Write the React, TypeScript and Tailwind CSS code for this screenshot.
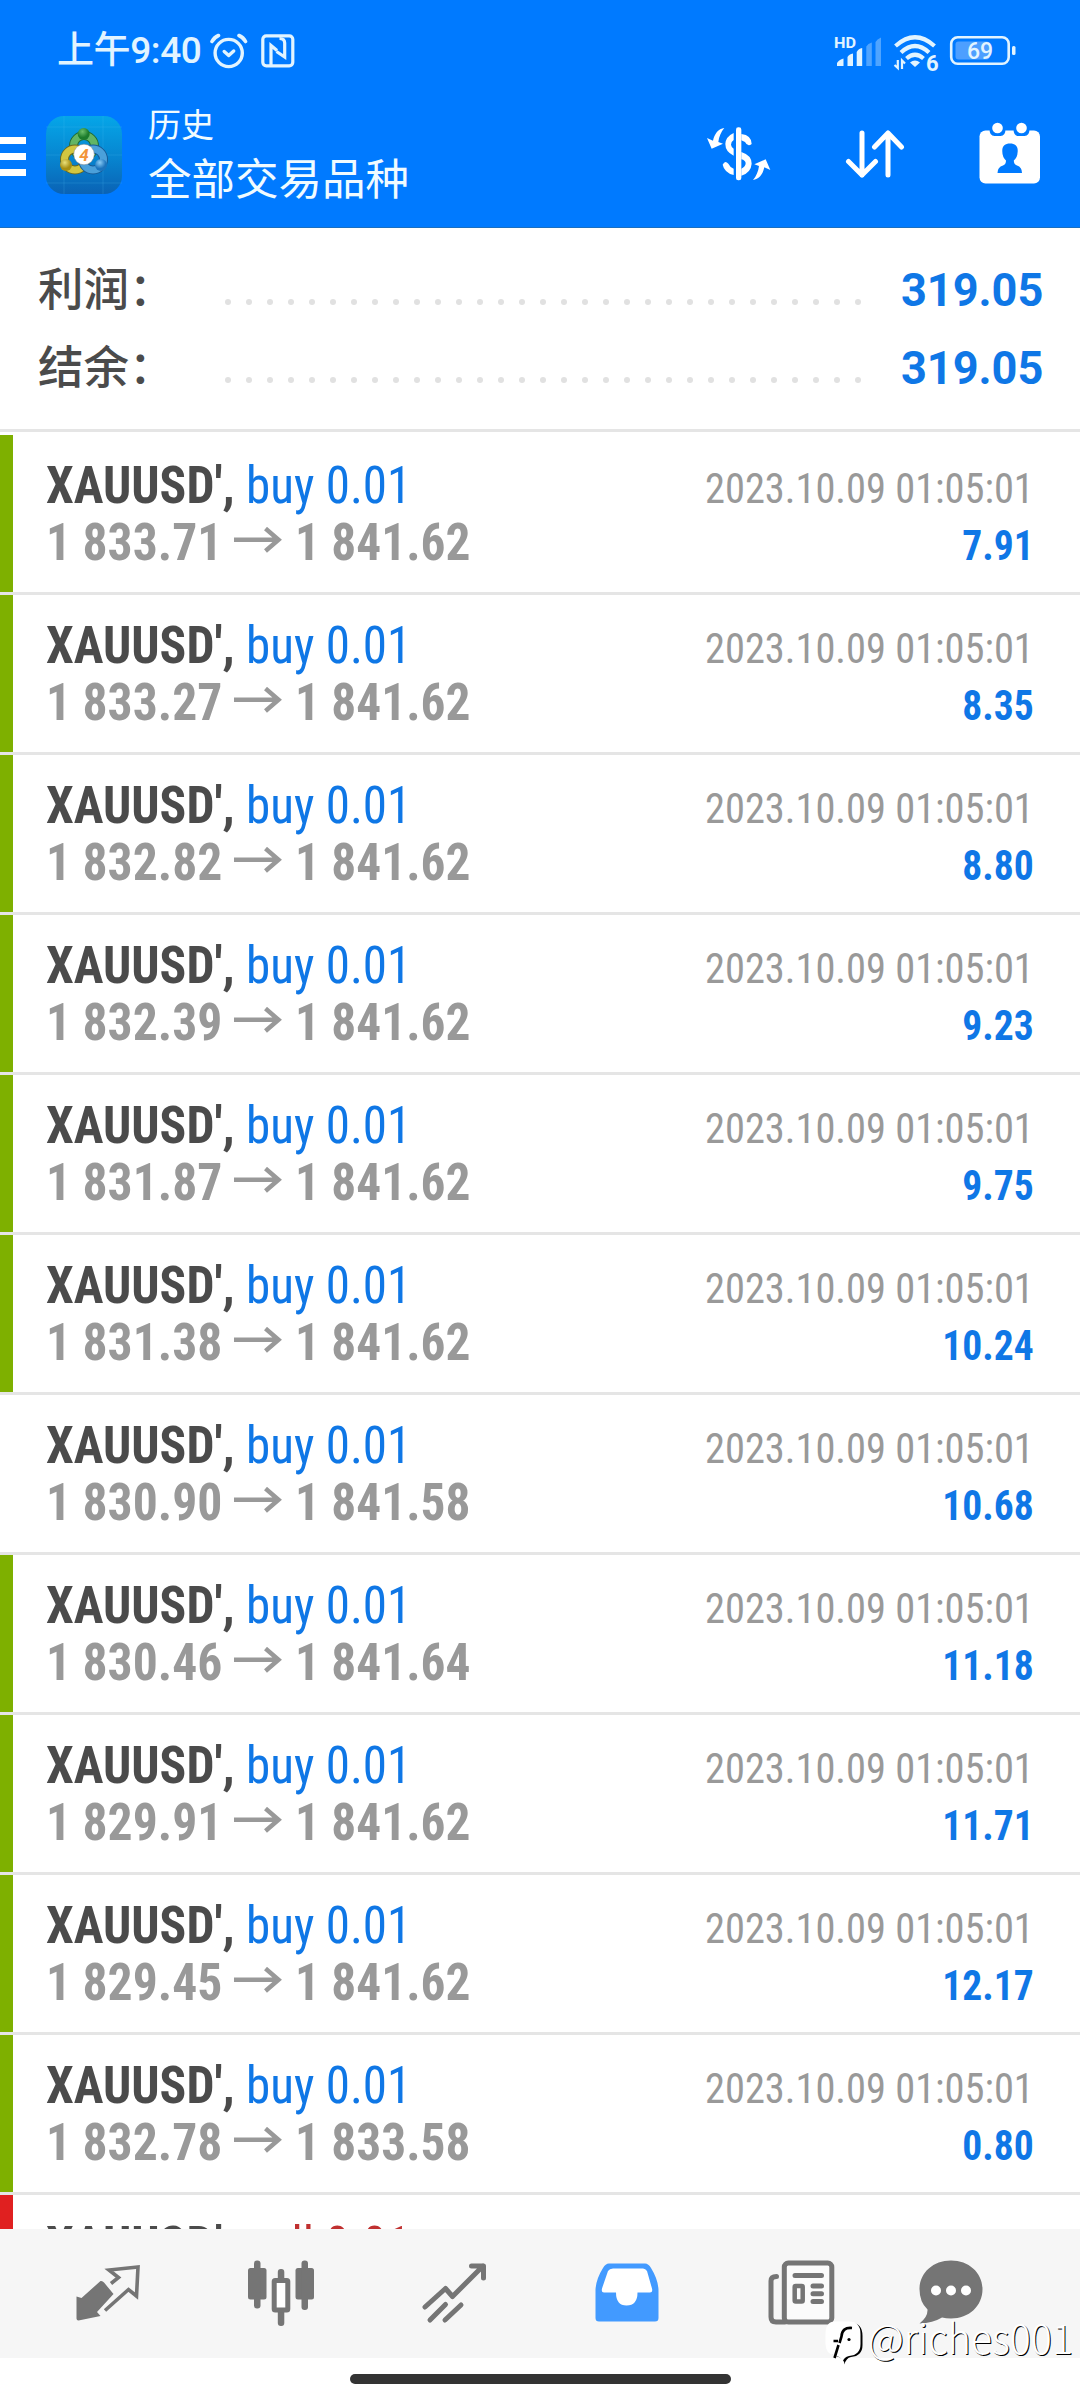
import React from 'react';

type DealStatus = 'win' | 'none' | 'loss';

interface Deal {
  symbol: string;
  side: 'buy' | 'sell';
  volume: string;
  open: string;
  close: string;
  time: string;
  profit: string;
  status: DealStatus;
}

const TIME = '2023.10.09 01:05:01';

const buy = (open: string, close: string, profit: string, status: DealStatus = 'win'): Deal => ({
  symbol: "XAUUSD'",
  side: 'buy',
  volume: '0.01',
  open,
  close,
  time: TIME,
  profit,
  status,
});

const DEALS: Deal[] = [
  buy('1 833.71', '1 841.62', '7.91'),
  buy('1 833.27', '1 841.62', '8.35'),
  buy('1 832.82', '1 841.62', '8.80'),
  buy('1 832.39', '1 841.62', '9.23'),
  buy('1 831.87', '1 841.62', '9.75'),
  buy('1 831.38', '1 841.62', '10.24'),
  buy('1 830.90', '1 841.58', '10.68', 'none'),
  buy('1 830.46', '1 841.64', '11.18'),
  buy('1 829.91', '1 841.62', '11.71'),
  buy('1 829.45', '1 841.62', '12.17'),
  buy('1 832.78', '1 833.58', '0.80'),
  { symbol: "XAUUSD'", side: 'sell', volume: '0.01', open: '', close: '', time: '', profit: '', status: 'loss' },
];

const BAR_COLORS: Record<DealStatus, string> = {
  win: 'bg-[#7eb000]',
  none: 'bg-transparent',
  loss: 'bg-[#e02020]',
};

const StatusBar = () => (
  <div className="flex items-start justify-between pt-[31px] pl-[57px] pr-[64px] h-[72px] text-[#e2f4ff]">
    <div className="flex items-center h-[40px]">
      <span className="w-[153px] whitespace-nowrap font-medium font-['Roboto','Noto_Sans_CJK_SC',sans-serif] text-[37px] leading-[40px] tracking-[-0.4px]">上午9:40</span>
      <svg className="w-[38px] h-[36px]" viewBox="0 0 38 36" fill="none" stroke="currentColor" strokeLinecap="round">
        <circle cx="18.7" cy="20" r="13.6" strokeWidth="3.4" />
        <path d="M2 8.500Q4 4.500 8.500 2.500M29 2.500Q33.500 4.500 35.500 8.500" strokeWidth="3.6" />
        <path d="M14.200 18.500L18.700 22.500L23.700 18" strokeWidth="3.4" strokeLinejoin="round" />
      </svg>
      <svg className="w-[34px] h-[34px] ml-[13px]" viewBox="0 0 34 34" fill="none" stroke="currentColor" strokeWidth="3.2">
        <rect x="1.800" y="1.800" width="30" height="30" rx="3.500" />
        <path d="M10 31V11.500L16 16.500M18.500 4.500Q23.700 4.500 23.700 9V23L15.500 17.500" strokeWidth="3.200" />
      </svg>
    </div>
    <div className="flex items-start pt-[4px] font-['Roboto',sans-serif]">
      <svg className="w-[48px] h-[34px]" viewBox="0 0 48 34" fill="currentColor">
        <text x="0" y="12.500" fontSize="15" fontWeight="700" textLength="22" lengthAdjust="spacingAndGlyphs">HD</text>
        <path d="M3 31V28Q5 24.500 9.500 23.500V31ZM13.500 31V22Q15 19 19 18.500V31ZM22.700 31V17Q24.500 13.500 28.200 13V31Z" />
        <path d="M32.300 31V11.500Q34 8.500 37.800 7.500V31ZM41.500 31V7Q43 4 47 2.500V31Z" opacity="0.35" />
      </svg>
      <svg className="w-[48px] h-[38px] ml-[11px] overflow-visible" viewBox="0 0 48 38" fill="none" stroke="currentColor">
        <path d="M2.500 11Q22 -6.500 41.500 11M8 17.500Q22 4.500 36 17.500M13.500 23.500Q22 16 30.500 23.500" strokeWidth="4.200" />
        <path d="M22 32L17 27.500Q22 23.500 27 27.500Z" fill="currentColor" stroke="none" />
        <path d="M4.800 25V33L1.500 30M9 34V25.500L12 28.500" strokeWidth="2.200" />
        <text x="33" y="35.500" fontSize="22" fontWeight="700" fill="currentColor" stroke="#007aff" strokeWidth="3" paintOrder="stroke">6</text>
      </svg>
      <svg className="w-[67px] h-[31px] ml-[8px]" viewBox="0 0 67 31" fill="none">
        <rect x="2.200" y="2.300" width="57.500" height="26.500" rx="6.500" stroke="currentColor" strokeWidth="2.600" />
        <rect x="6.500" y="6.500" width="34" height="18" rx="3" fill="#4d9fff" />
        <rect x="63" y="11" width="3.500" height="9" rx="1.500" fill="currentColor" />
        <text x="31" y="23.500" fontSize="23" fontWeight="500" textAnchor="middle" fill="currentColor">69</text>
      </svg>
    </div>
  </div>
);

const AppLogo = () => (
  <svg className="w-[76px] h-[78px]" viewBox="0 0 76 78">
    <defs>
      <linearGradient id="tile" x1="0" y1="0" x2="0" y2="1">
        <stop offset="0" stopColor="#05a6e8" />
        <stop offset="0.550" stopColor="#0784cf" />
        <stop offset="1" stopColor="#0a62b4" />
      </linearGradient>
      <radialGradient id="green" cx="0.4" cy="0.3">
        <stop offset="0" stopColor="#6cc06a" />
        <stop offset="1" stopColor="#1c7c2c" />
      </radialGradient>
      <radialGradient id="yellow" cx="0.4" cy="0.3">
        <stop offset="0" stopColor="#e9e07a" />
        <stop offset="1" stopColor="#a78f13" />
      </radialGradient>
      <radialGradient id="blue" cx="0.4" cy="0.3">
        <stop offset="0" stopColor="#8accf5" />
        <stop offset="1" stopColor="#1c74bd" />
      </radialGradient>
    </defs>
    <rect width="76" height="78" rx="18" fill="url(#tile)" />
    <path d="M0 11H76M0 39H76M0 67H76M18 0V78M57 0V78" stroke="#4fc0f0" strokeOpacity="0.200" />
    <circle cx="38" cy="30" r="10.500" fill="none" stroke="#1f6a35" strokeWidth="9" />
    <circle cx="38" cy="30" r="10.500" fill="none" stroke="#62b565" strokeWidth="7" />
    <circle cx="29" cy="43.500" r="10.500" fill="none" stroke="#6a6a20" strokeWidth="9" />
    <circle cx="29" cy="43.500" r="10.500" fill="none" stroke="#d3c640" strokeWidth="7" />
    <circle cx="47" cy="43.500" r="10.500" fill="none" stroke="#175a96" strokeWidth="9" />
    <circle cx="47" cy="43.500" r="10.500" fill="none" stroke="#4ba0da" strokeWidth="7" />
    <circle cx="37.700" cy="18" r="6" fill="url(#green)" />
    <circle cx="20" cy="49" r="6" fill="url(#yellow)" />
    <circle cx="55" cy="49" r="6" fill="url(#blue)" />
    <circle cx="38" cy="38.500" r="10.300" fill="#fff" stroke="#8a8a8a" strokeWidth="0.500" />
    <text x="38" y="44.500" fontSize="17" fontWeight="700" fontStyle="italic" textAnchor="middle" fill="#f2953a" className="font-['Roboto',sans-serif]">4</text>
  </svg>
);

const DollarIcon = () => (
  <svg className="w-[64px] h-[54px]" viewBox="24 53 192 162" fill="#fff">
    <rect x="111" y="54" width="16" height="159" rx="7" />
    <path d="M127 74Q158 78 158 104Q146 114 138 98L127 93ZM127 128Q158 138 158 163Q156 190 127 199V178Q140 172 140 161Q139 153 127 150Z" />
    <path d="M104 71V92Q96 97 96 106Q97 114 104 118V139Q79 127 79 104Q80 82 104 71ZM71 166Q78 152 88 163Q92 172 104 178V197Q76 190 71 166Z" />
    <path d="M76 56C58 58 46 74 42 94L24 86L38 118L72 103L58 98C60 82 66 68 76 56Z" />
    <path d="M76 56C58 58 46 74 42 94L24 86L38 118L72 103L58 98C60 82 66 68 76 56Z" transform="rotate(180 119 134)" />
  </svg>
);

const SortIcon = () => (
  <svg className="w-[60px] h-[50px]" viewBox="0 0 60 50" fill="none" stroke="#fff" strokeWidth="5" strokeLinecap="round" strokeLinejoin="round">
    <path d="M17 4V46M3.500 32.500L17 46L30.500 32.500M43 46V4M29.500 18L43 4L56.500 18" />
  </svg>
);

const CalendarIcon = () => (
  <svg className="w-[62px] h-[62px]" viewBox="0 0 62 62">
    <rect x="0.500" y="8.500" width="60.500" height="53" rx="6" fill="#fff" />
    <path d="M10.500 7H26.500Q26.500 14 21.500 14H15.500Q10.500 14 10.500 7ZM34.500 7H50.500Q50.500 14 45.500 14H39.500Q34.500 14 34.500 7Z" fill="#007aff" />
    <circle cx="18.500" cy="6" r="5.300" fill="#fff" />
    <circle cx="42.500" cy="6" r="5.300" fill="#fff" />
    <path d="M31 21.500C36 21.500 39 24 38.700 29.500Q38.700 35 34.800 38.500Q34.800 42.500 38 43.500Q43 45 43 51H18.500Q18.500 45 24 43.500Q27 42.500 27 38.500Q23.300 35 23.300 29.500C23 24 26 21.500 31 21.500Z" fill="#007aff" />
  </svg>
);

const Header = () => (
  <header className="bg-[#007aff] h-[228px] border-b border-[#1a6fc0]">
    <StatusBar />
    <div className="flex items-center h-[155px]">
      <div className="flex flex-col gap-[9px] mt-[13px]">
        <div className="w-[26px] h-[7px] bg-white" />
        <div className="w-[26px] h-[7px] bg-white" />
        <div className="w-[26px] h-[7px] bg-white" />
      </div>
      <div className="ml-5 mt-[10px]">
        <AppLogo />
      </div>
      <div className="ml-[26px] mt-[9px] flex flex-col text-[#f0fbff] font-['Noto_Sans_CJK_SC',sans-serif]">
        <span className="text-[33px] leading-[45px]">历史</span>
        <span className="text-[43.500px] leading-[62px]">全部交易品种</span>
      </div>
      <div className="ml-auto mr-[39px] mt-[9px] flex items-center">
        <DollarIcon />
        <div className="ml-[74px]">
          <SortIcon />
        </div>
        <div className="ml-[74px] mb-[2px]">
          <CalendarIcon />
        </div>
      </div>
    </div>
  </header>
);

const SummaryRow = ({ label, value }: { label: string; value: string }) => (
  <div className="flex items-center h-[78px]">
    <span className="w-[187px] mb-[6px] text-[45.500px] leading-[72px] font-medium text-[#4b4b4b] font-['Noto_Sans_CJK_SC',sans-serif]">{label}</span>
    <div className="w-[636px] flex justify-between mt-[26px]">
      {Array.from({ length: 31 }).map((_, i) => (
        <i key={i} className="w-[6px] h-[6px] rounded-full bg-[#e1e1e1]" />
      ))}
    </div>
    <span className="ml-auto mt-[2px] text-[46px] leading-[76px] font-bold text-[#0f77e6] font-['Roboto',sans-serif] origin-right scale-x-[0.98]">{value}</span>
  </div>
);

const DealRow: React.FC<{ deal: Deal }> = ({ deal }) => (
  <div className="shrink-0 h-[160px] flex border-b-[3px] border-[#e5e5e5] font-['Roboto_Condensed',sans-serif] whitespace-nowrap">
    <div className={`w-[13px] h-[157px] ${BAR_COLORS[deal.status]}`} />
    <div className="flex-1 flex justify-between pl-[33px] pr-[46px]">
      <div className="pt-[22px]">
        <div className="text-[52.500px] leading-[57px] flex">
          <span className="w-[200px] origin-left scale-x-[0.945] font-bold text-[#4b4b4b]">{deal.symbol},</span>
          <span className={`origin-left scale-x-[0.935] ${deal.side === 'buy' ? 'text-[#0f77e6]' : 'text-[#c03030]'}`}>
            {deal.side} {deal.volume}
          </span>
        </div>
        {deal.open && (
          <div className="text-[52.500px] leading-[57px] flex font-bold text-[#999]">
            <span className="w-[188px] origin-left scale-x-[0.945]">{deal.open}</span>
            <svg className="w-[48px] h-[26px] mt-[13px] mr-[13px]" viewBox="0 0 48 26" fill="none" stroke="#999" strokeWidth="4.500">
              <path d="M0 12.800H45M31.500 1.500L44.500 12.800L31.500 24" />
            </svg>
            <span className="origin-left scale-x-[0.94]">{deal.close}</span>
          </div>
        )}
      </div>
      <div className="pt-[25px] text-right text-[43px] leading-[57px]">
        <div className="origin-right scale-x-[0.94] text-[#999]">{deal.time}</div>
        <div className="origin-right scale-x-[0.92] font-bold text-[#0f77e6]">{deal.profit}</div>
      </div>
    </div>
  </div>
);

const GREY = '#757575';

const TabBar = () => (
  <nav className="h-[129px] bg-[#f6f6f6] flex pl-[21px] pt-[31px]">
    <div className="w-[173px] flex justify-center">
      <svg className="w-[66px] h-[66px]" viewBox="0 0 66 66">
        <path d="M1.500 36.500L6.500 38L25.500 21Q27.500 20.500 29 22.500L38.500 34L22 52L25.500 56L3.500 60.500Q1.500 60.500 1.500 58.500Z" fill={GREY} />
        <path d="M36 23.500L43.500 17.500L34 10L63 7L61.500 36L53.500 29.500L30 50.500" fill="none" stroke={GREY} strokeWidth="3.600" />
      </svg>
    </div>
    <div className="w-[173px] flex justify-center">
      <svg className="w-[66px] h-[66px]" viewBox="0 0 66 66" fill={GREY}>
        <rect x="0" y="8" width="18.500" height="31.500" rx="2.500" />
        <rect x="6" y="0.500" width="6.500" height="48" rx="3" />
        <rect x="47.500" y="8" width="18.500" height="31.500" rx="2.500" />
        <rect x="53.500" y="0.500" width="6.500" height="49.500" rx="3" />
        <rect x="29.800" y="9" width="6.500" height="57" rx="3" />
        <rect x="26.200" y="20.500" width="13.600" height="29.500" rx="1" fill="#fff" stroke={GREY} strokeWidth="5" />
      </svg>
    </div>
    <div className="w-[173px] flex justify-center">
      <svg className="w-[66px] h-[66px]" viewBox="0 0 66 66" fill="none" stroke={GREY} strokeWidth="5" strokeLinecap="round" strokeLinejoin="round">
        <path d="M4 47L24.500 28.500L31.500 36.500L62 6M50.500 6H62.500V18" />
        <path d="M9 60L24.500 44.500M24 60L40 45" />
      </svg>
    </div>
    <div className="w-[173px] flex justify-center">
      <svg className="w-[64px] h-[66px]" viewBox="0 0 64 66">
        <path d="M14 3.500H50Q53.500 3.500 56 8Q63.500 20 63.500 31V58Q63.500 61.500 60 61.500H4Q0.500 61.500 0.500 58V31Q0.500 20 8 8Q10.500 3.500 14 3.500Z" fill="#429aff" />
        <path d="M18 8.500H48Q50.500 8.500 52 11L57 28.500Q58 32.500 55 32.500H42.500Q42.500 45.500 31.500 45.500Q21 45.500 21 32.500H9Q6 32.500 7 28.500L13 11Q14.500 8.500 18 8.500Z" fill="#fff" />
      </svg>
    </div>
    <div className="w-[177px] flex justify-center">
      <svg className="w-[67px] h-[66px]" viewBox="0 0 67 66" fill="none" stroke={GREY} strokeWidth="5" strokeLinecap="round">
        <rect x="16.300" y="3" width="47.500" height="59" rx="4" fill="#fbfbfb" />
        <path d="M8.500 16.500Q3 16.500 3 21V57Q3 62 8 62H17" />
        <path d="M27 15.500H53.500M45 26H53.500M45 33.700H53.500M45 41.500H53.500" />
        <rect x="26.700" y="26" width="8" height="15.500" rx="1" strokeWidth="4.500" />
      </svg>
    </div>
    <div className="w-[121px] flex justify-center">
      <svg className="w-[64px] h-[66px]" viewBox="0 0 64 66">
        <path d="M32 0.500C50 0.500 63.500 13 63.500 29C63.500 46 50 58.500 32 58.500Q27 58.500 23 57.500Q14 63 0.500 63.500Q9 57 8.500 49.500Q0.500 42 0.500 29C0.500 13 14 0.500 32 0.500Z" fill={GREY} />
        <circle cx="17" cy="30.500" r="5" fill="#fff" />
        <circle cx="32" cy="30.500" r="5" fill="#fff" />
        <circle cx="47" cy="30.500" r="5" fill="#fff" />
      </svg>
    </div>
  </nav>
);

const Watermark = () => (
  <div className="absolute left-[824px] top-[2318px] flex items-start">
    <svg className="w-[42px] h-[48px]" viewBox="0 0 42 48">
      <path d="M13 5H27Q38.500 5 38.500 18V27Q38.500 38 27 39Q22 40 20.500 46.500Q20 40 12 38Q4 35 3 27V18Q3 5 13 5Z" fill="#000" />
      <path d="M11 3.500H25Q36.500 3.500 36.500 16V26Q36.500 37 25 38Q20 39 18.500 44Q18 39 11 37.500Q1.500 36 1.500 26V16Q1.500 3.500 11 3.500Z" fill="#fff" />
      <path d="M28 10Q18 9 17.500 18.500L15.500 25M9.500 23H14M14.500 27L10.500 40" fill="none" stroke="#000" strokeWidth="2.600" />
      <circle cx="25" cy="21.500" r="1.600" fill="#000" />
    </svg>
    <span className="ml-[2px] -mt-[6px] origin-left scale-x-[0.96] text-[41px] leading-[48px] font-light text-white whitespace-nowrap font-['Noto_Sans_CJK_SC',sans-serif] [text-shadow:1px_1px_0.5px_#000]">@riches001</span>
  </div>
);

export default function App() {
  return (
    <div className="relative w-[1080px] h-[2400px] flex flex-col bg-white overflow-hidden">
      <Header />
      <section className="h-[204px] pt-[22px] pl-[38px] pr-[37px] border-b-[3px] border-[#e5e5e5]">
        <SummaryRow label="利润：" value="319.05" />
        <SummaryRow label="结余：" value="319.05" />
      </section>
      <main className="h-[1797px] pt-[3px] flex flex-col overflow-hidden">
        {DEALS.map((deal, i) => (
          <DealRow key={i} deal={deal} />
        ))}
      </main>
      <TabBar />
      <div className="h-[42px] bg-white flex justify-center pt-[16px]">
        <div className="w-[381px] h-[10px] rounded-full bg-[#333]" />
      </div>
      <Watermark />
    </div>
  );
}
